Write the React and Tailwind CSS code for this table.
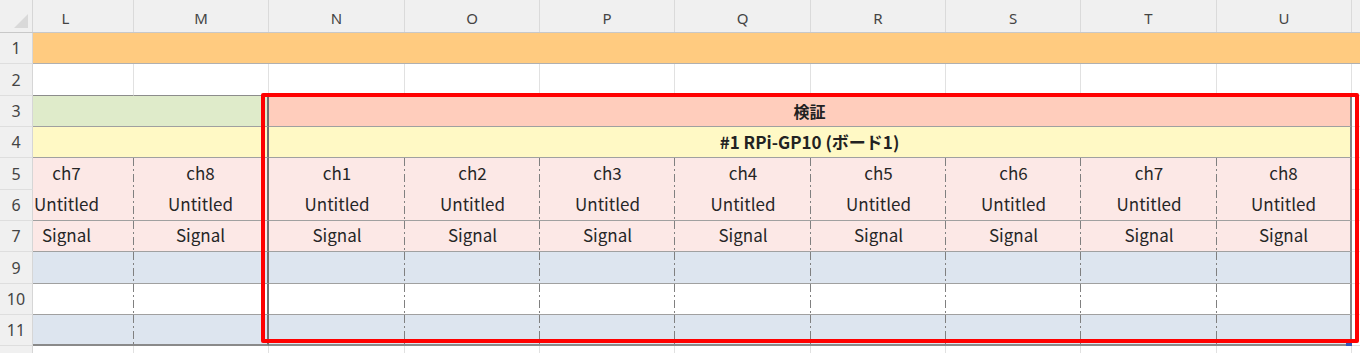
import React from "react";

const W = [101, 135, 136, 135, 135, 136, 135, 135, 136, 135];
const WC = { 101: "w-[101px]", 135: "w-[135px]", 136: "w-[136px]" };
const LETTERS = ["L", "M", "N", "O", "P", "Q", "R", "S", "T", "U"];
const DASH =
  "bg-[image:repeating-linear-gradient(to_bottom,#808080_0px,#808080_8px,transparent_8px,transparent_11px,#808080_11px,#808080_13px,transparent_13px,transparent_16px)] bg-[length:1px_100%] bg-no-repeat bg-right";

function RowHead({ n, h, last }) {
  return (
    <div
      className={`${h} w-[33px] shrink-0 bg-[#f0f0f0] border-r border-[#d6d6d6] ${
        last ? "" : "border-b border-b-[#dedede]"
      } flex items-center justify-center text-[16px] text-[#444] font-['Noto_Sans',sans-serif]`}
    >
      {n}
    </div>
  );
}

function Cell({ i, className = "", children }) {
  const w = WC[W[i]];
  if (i === 0) {
    return (
      <div className={`${w} shrink-0 overflow-hidden flex justify-end ${className}`}>
        <div className="w-[135px] shrink-0 flex items-center justify-center">{children}</div>
      </div>
    );
  }
  return (
    <div className={`${w} shrink-0 flex items-center justify-center ${className}`}>{children}</div>
  );
}

function vline(i) {
  if (i === 1) return "border-r-2 border-r-[#707070]";
  if (i === 9) return "border-r-2 border-r-[#858585]";
  return DASH;
}

function DataRow({ n, h, bg, bottom, labels }) {
  return (
    <div className={`flex ${h}`}>
      <RowHead n={n} h={h} />
      {W.map((_, i) => (
        <Cell key={i} i={i} className={`${bg} ${vline(i)} ${bottom} pb-[2px]`}>
          {labels ? labels[i] : null}
        </Cell>
      ))}
      <div className={`w-[8px] shrink-0 bg-white border-b border-[#e1e1e1]`} />
    </div>
  );
}

export default function App() {
  const chLabels = ["ch7", "ch8", "ch1", "ch2", "ch3", "ch4", "ch5", "ch6", "ch7", "ch8"];
  const untitled = W.map(() => "Untitled");
  const signal = W.map(() => "Signal");
  return (
    <div className="relative w-[1360px] h-[353px] overflow-hidden bg-white font-['Noto_Sans_CJK_JP',sans-serif] text-[17px] text-[#262626]">
      {/* column header */}
      <div className="flex h-[33px] bg-[#f0f0f0] border-b border-[#c8c8c8]">
        <div className="w-[33px] shrink-0 border-r border-[#d6d6d6] flex items-end justify-end p-[4px]">
          <svg width="14" height="14" viewBox="0 0 14 14">
            <polygon points="14,0 14,14 0,14" fill="#d9d9d9" />
          </svg>
        </div>
        {LETTERS.map((l, i) => (
          <Cell
            key={l}
            i={i}
            className="border-r border-[#dadada] text-[15px] text-[#444] font-['Noto_Sans',sans-serif] pt-[5px]"
          >
            {l}
          </Cell>
        ))}
        <div className="w-[8px] shrink-0" />
      </div>

      {/* row 1 */}
      <div className="flex h-[31px]">
        <RowHead n="1" h="h-[31px]" />
        <div className="flex-1 bg-[#ffcb80] border-b border-[#b0b0b0]" />
      </div>

      {/* row 2 */}
      <div className="flex h-[32px]">
        <RowHead n="2" h="h-[32px]" />
        {W.map((_, i) => (
          <Cell key={i} i={i} className="bg-white border-r border-[#e1e1e1] border-b border-b-[#8c8c8c]" />
        ))}
        <div className="w-[8px] shrink-0 bg-white border-b border-[#e1e1e1]" />
      </div>

      {/* row 3 */}
      <div className="flex h-[31px]">
        <RowHead n="3" h="h-[31px]" />
        <div className="w-[236px] shrink-0 bg-[#dfebca] border-r-2 border-r-[#707070] border-b border-b-[#a0a0a0]" />
        <div className="w-[1083px] shrink-0 bg-[#ffcdbc] border-r-2 border-r-[#858585] border-b border-b-[#a0a0a0] flex items-center justify-center font-bold text-[16px] text-[#222] pb-[1px]">
          検証
        </div>
        <div className="w-[8px] shrink-0 bg-white border-b border-[#e1e1e1]" />
      </div>

      {/* row 4 */}
      <div className="flex h-[31px]">
        <RowHead n="4" h="h-[31px]" />
        <div className="w-[236px] shrink-0 bg-[#fff9c5] border-r-2 border-r-[#707070] border-b border-b-[#a0a0a0]" />
        <div className="w-[1083px] shrink-0 bg-[#fff9c5] border-r-2 border-r-[#858585] border-b border-b-[#a0a0a0] flex items-center justify-center font-bold text-[17px] text-[#222] pb-[1px]">
          #1 RPi-GP10 (ボード1)
        </div>
        <div className="w-[8px] shrink-0 bg-white border-b border-[#e1e1e1]" />
      </div>

      <DataRow n="5" h="h-[32px]" bg="bg-[#fce8e6]" bottom="" labels={chLabels} />
      <DataRow n="6" h="h-[31px]" bg="bg-[#fce8e6]" bottom="border-b border-b-[#a0a0a0]" labels={untitled} />
      <DataRow n="7" h="h-[31px]" bg="bg-[#fce8e6]" bottom="border-b border-b-[#a0a0a0]" labels={signal} />
      <DataRow n="9" h="h-[32px]" bg="bg-[#dde5ef]" bottom="border-b border-b-[#a0a0a0]" />
      <DataRow n="10" h="h-[31px]" bg="bg-white" bottom="border-b border-b-[#a0a0a0]" />
      <DataRow n="11" h="h-[31px]" bg="bg-[#dde5ef]" bottom="border-b-2 border-b-[#8a8a8a]" />

      {/* row 12 partial */}
      <div className="flex h-[10px]">
        <RowHead n="" h="h-[10px]" last />
        {W.map((_, i) => (
          <Cell key={i} i={i} className="bg-white border-r border-[#e1e1e1]" />
        ))}
        <div className="w-[8px] shrink-0 bg-white" />
      </div>

      {/* fill handle */}
      <div className="absolute left-[1346px] top-[341px] w-[6px] h-[5px] bg-[#3558b8]" />
      {/* red highlight rectangle */}
      <div className="absolute left-[261px] top-[93px] w-[1098px] h-[250px] border-4 border-[#ff0000] rounded-[2px]" />
    </div>
  );
}
